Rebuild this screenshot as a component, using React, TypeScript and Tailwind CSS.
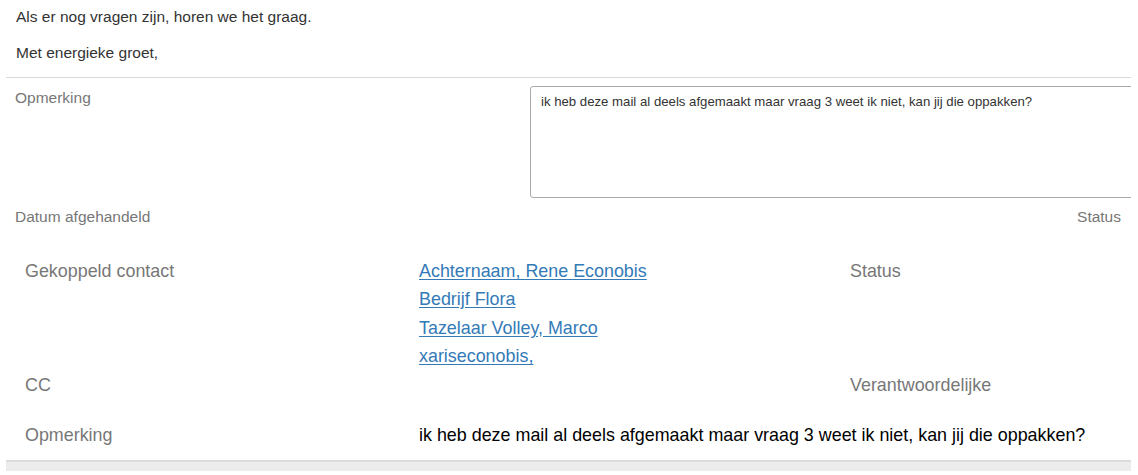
const contacts = [
  'Achternaam, Rene Econobis',
  'Bedrijf Flora',
  'Tazelaar Volley, Marco',
  'xariseconobis,',
];

export default function App() {
  return (
    <div className="w-[1138px] h-[475px] overflow-hidden bg-white font-['Liberation_Sans',Arial,sans-serif] text-[#333]">
      {/* mail body tail */}
      <div className="pl-[16px] pt-[7px] text-[15.5px] leading-[20px]">
        <p className="mb-[16px]">Als er nog vragen zijn, horen we het graag.</p>
        <p className="mb-[14px]">Met energieke groet,</p>
      </div>

      <div className="ml-[6px] w-[1125px] border-t border-[#d9d9d9] overflow-hidden">
        {/* opmerking edit */}
        <div className="flex pt-[8px]">
          <div className="w-[524px] shrink-0 pl-[9px] pt-[2px] text-[15.5px] leading-[20px] text-[#777]">Opmerking</div>
          <textarea
            readOnly
            className="h-[112px] w-[640px] shrink-0 resize-none rounded-[3px] border border-[#aaa] px-[10px] pt-[7px] pb-[5px] text-[13.2px] leading-[16px] text-[#333] outline-none"
            defaultValue="ik heb deze mail al deels afgemaakt maar vraag 3 weet ik niet, kan jij die oppakken?"
          />
        </div>
        <div className="flex justify-between pl-[9px] pr-[10px] pt-[9px] text-[15.5px] leading-[20px] text-[#777]">
          <span>Datum afgehandeld</span>
          <span>Status</span>
        </div>

        {/* details */}
        <div className="pl-[19px] pt-[30px] text-[17.9px] leading-[28.33px]">
          <div className="flex">
            <div className="w-[394px] text-[#777]">Gekoppeld contact</div>
            <div className="w-[431px] flex flex-col">
              {contacts.map((c) => (
                <a key={c} href="#" className="text-[#337ab7] underline underline-offset-2">
                  {c}
                </a>
              ))}
            </div>
            <div className="text-[#777]">Status</div>
          </div>
          <div className="flex mt-[1px]">
            <div className="w-[394px] text-[#777]">CC</div>
            <div className="w-[431px]"></div>
            <div className="text-[#777]">Verantwoordelijke</div>
          </div>
          <div className="flex mt-[21px]">
            <div className="w-[394px] text-[#777]">Opmerking</div>
            <div className="text-black">ik heb deze mail al deels afgemaakt maar vraag 3 weet ik niet, kan jij die oppakken?</div>
          </div>
        </div>

        <div className="mt-[11px] h-[11px] border-t-2 border-[#dcdcdc] bg-[#ececec]"></div>
      </div>
    </div>
  );
}
